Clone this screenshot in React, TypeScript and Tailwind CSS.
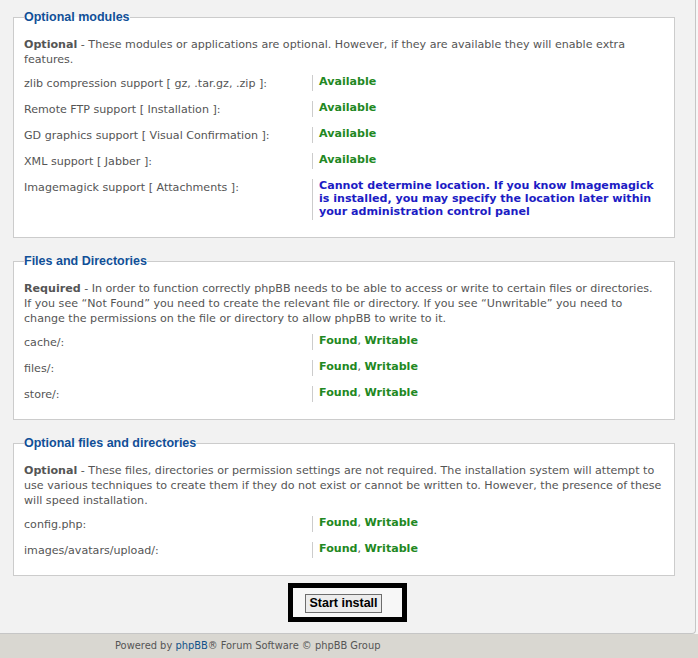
import React, { FC } from 'react'

type Status = { label: string; value: React.ReactNode }

const body = "font-['DejaVu_Sans',Verdana,sans-serif]"

const ok = (text: string) => <span className="text-[#228822]">{text}</span>

const foundWritable = (
    <>
        {ok('Found')}
        <span className="font-normal text-[#555]">, </span>
        {ok('Writable')}
    </>
)

const modules: Status[] = [
    { label: 'zlib compression support [ gz, .tar.gz, .zip ]:', value: ok('Available') },
    { label: 'Remote FTP support [ Installation ]:', value: ok('Available') },
    { label: 'GD graphics support [ Visual Confirmation ]:', value: ok('Available') },
    { label: 'XML support [ Jabber ]:', value: ok('Available') },
    {
        label: 'Imagemagick support [ Attachments ]:',
        value: (
            <span className="block text-[#1c1cc4] leading-[13px]">
                Cannot determine location. If you know Imagemagick is installed, you may specify the
                location later within your administration control panel
            </span>
        ),
    },
]

const required: Status[] = [
    { label: 'cache/:', value: foundWritable },
    { label: 'files/:', value: foundWritable },
    { label: 'store/:', value: foundWritable },
]

const optionalFiles: Status[] = [
    { label: 'config.php:', value: foundWritable },
    { label: 'images/avatars/upload/:', value: foundWritable },
]

const Section: FC<{
    title: string
    lead: string
    text: string
    rows: Status[]
    first?: boolean
    narrow?: boolean
}> = ({ title, lead, text, rows, first, narrow }) => (
    <fieldset
        className={`border border-[#cccccc] bg-white pl-[10px] pr-[9px] pt-[12px] pb-[17px] ${first ? '' : 'mt-[16px]'}`}
    >
        <legend className="font-['Liberation_Sans',Arial,sans-serif] font-bold text-[12.5px] leading-[15px] text-[#115098]">
            {title}
        </legend>
        <p className={`leading-[15px] mb-[8px] ${narrow ? 'pr-[4px]' : ''}`}>
            <strong>{lead}</strong> - {text}
        </p>
        <div className="flex flex-col gap-[10px]">
            {rows.map((row) => (
                <div key={row.label} className="flex items-start">
                    <div className="w-[288px] shrink-0 pt-[2px] leading-[14px]">{row.label}</div>
                    <div className="flex-1 border-l border-[#cccccc] pl-[6px] pb-[2px] leading-[14px] font-bold">
                        {row.value}
                    </div>
                </div>
            ))}
        </div>
    </fieldset>
)

export default function App() {
    return (
        <div className={`w-[698px] h-[658px] overflow-hidden bg-[#f7f7f7] text-[11.1px] text-[#555] ${body}`}>
            <div className="w-[696px] bg-[#f2f2f2] border-r border-b border-[#c6c6c6] rounded-br-[4px] pt-[10px] pb-[11px] pl-[13px] pr-[20px]">
                <Section
                    first
                    title="Optional modules"
                    lead="Optional"
                    text="These modules or applications are optional. However, if they are available they will enable extra features."
                    rows={modules}
                />
                <Section
                    narrow
                    title="Files and Directories"
                    lead="Required"
                    text="In order to function correctly phpBB needs to be able to access or write to certain files or directories. If you see “Not Found” you need to create the relevant file or directory. If you see “Unwritable” you need to change the permissions on the file or directory to allow phpBB to write to it."
                    rows={required}
                />
                <Section
                    title="Optional files and directories"
                    lead="Optional"
                    text="These files, directories or permission settings are not required. The installation system will attempt to use various techniques to create them if they do not exist or cannot be written to. However, the presence of these will speed installation."
                    rows={optionalFiles}
                />
                <div className="flex justify-center mt-[7px] pl-[7px]">
                    <div className="border-[5px] border-black bg-[#f7f7f7] pt-[6px] pb-[4px] pl-[12px] pr-[20px]">
                        <button className="h-[19px] px-[3px] border border-[#6d6d6d] bg-[#ececec] text-black font-['Liberation_Sans',Arial,sans-serif] font-bold text-[12.5px] leading-[17px]">
                            Start install
                        </button>
                    </div>
                </div>
            </div>
            <div className="bg-[#d9d7d1] h-full pl-[115px] pt-[5px] text-[9.9px] text-[#555]">
                Powered by <span className="text-[#105289]">phpBB</span>® Forum Software © phpBB Group
            </div>
        </div>
    )
}
